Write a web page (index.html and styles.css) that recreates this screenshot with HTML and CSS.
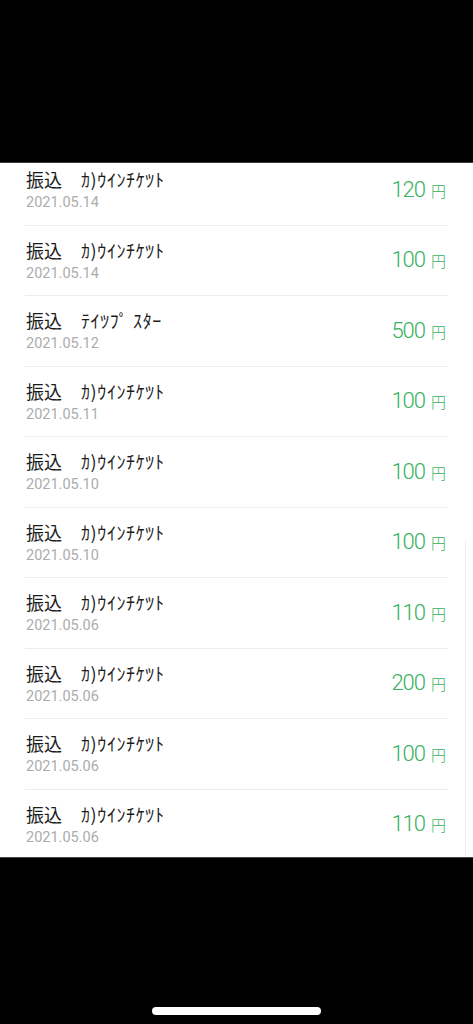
FILE: index.html
```html
<!DOCTYPE html>
<html lang="ja">
<head>
<meta charset="utf-8">
<link rel="stylesheet" href="styles.css">
</head>
<body>
<div class="screen">
  <div class="top-bar"></div>
  <div class="viewport">
    <ul class="list">
      <li class="row"><div class="info"><div class="title"><span>振込</span><span class="name">ｶ)ｳｲﾝﾁｹﾂﾄ</span></div><div class="date">2021.05.14</div></div><div class="amount"><span class="num">120</span><span class="yen">円</span></div></li>
      <li class="row"><div class="info"><div class="title"><span>振込</span><span class="name">ｶ)ｳｲﾝﾁｹﾂﾄ</span></div><div class="date">2021.05.14</div></div><div class="amount"><span class="num">100</span><span class="yen">円</span></div></li>
      <li class="row"><div class="info"><div class="title"><span>振込</span><span class="name">ﾃｲﾂﾌﾟ ｽﾀｰ</span></div><div class="date">2021.05.12</div></div><div class="amount"><span class="num">500</span><span class="yen">円</span></div></li>
      <li class="row"><div class="info"><div class="title"><span>振込</span><span class="name">ｶ)ｳｲﾝﾁｹﾂﾄ</span></div><div class="date">2021.05.11</div></div><div class="amount"><span class="num">100</span><span class="yen">円</span></div></li>
      <li class="row"><div class="info"><div class="title"><span>振込</span><span class="name">ｶ)ｳｲﾝﾁｹﾂﾄ</span></div><div class="date">2021.05.10</div></div><div class="amount"><span class="num">100</span><span class="yen">円</span></div></li>
      <li class="row"><div class="info"><div class="title"><span>振込</span><span class="name">ｶ)ｳｲﾝﾁｹﾂﾄ</span></div><div class="date">2021.05.10</div></div><div class="amount"><span class="num">100</span><span class="yen">円</span></div></li>
      <li class="row"><div class="info"><div class="title"><span>振込</span><span class="name">ｶ)ｳｲﾝﾁｹﾂﾄ</span></div><div class="date">2021.05.06</div></div><div class="amount"><span class="num">110</span><span class="yen">円</span></div></li>
      <li class="row"><div class="info"><div class="title"><span>振込</span><span class="name">ｶ)ｳｲﾝﾁｹﾂﾄ</span></div><div class="date">2021.05.06</div></div><div class="amount"><span class="num">200</span><span class="yen">円</span></div></li>
      <li class="row"><div class="info"><div class="title"><span>振込</span><span class="name">ｶ)ｳｲﾝﾁｹﾂﾄ</span></div><div class="date">2021.05.06</div></div><div class="amount"><span class="num">100</span><span class="yen">円</span></div></li>
      <li class="row"><div class="info"><div class="title"><span>振込</span><span class="name">ｶ)ｳｲﾝﾁｹﾂﾄ</span></div><div class="date">2021.05.06</div></div><div class="amount"><span class="num">110</span><span class="yen">円</span></div></li>
    </ul>
    <div class="scrollbar"></div>
  </div>
  <div class="bottom-bar"><div class="home-indicator"></div></div>
</div>
</body>
</html>
```
FILE: styles.css
```css
* { box-sizing: border-box; }
html, body { margin: 0; padding: 0; background: #000; }
body { width: 473px; height: 1024px; overflow: hidden; font-family: Roboto, "Noto Sans CJK JP", sans-serif; }

.screen { display: flex; flex-direction: column; height: 1024px; }

.top-bar { height: 163px; background: #000; border-bottom: 1px solid #3a3a3a; flex: none; }

.viewport {
  position: relative;
  height: 694px;
  flex: none;
  background: #fff;
  overflow: hidden;
}

.list {
  list-style: none;
  margin: -8px 25px 0 25px;
  padding: 0;
}

.row {
  height: 70.5px;
  border-bottom: 1px solid #ececec;
  display: flex;
  align-items: center;
  justify-content: space-between;
}

.info { padding-left: 1px; }

.title {
  display: flex;
  gap: 19px;
  font-family: "Noto Sans CJK JP", sans-serif;
  font-size: 18px;
  line-height: 22px;
  color: #1c1c1c;
  white-space: pre;
}

.name { letter-spacing: 0.6px; }

.date {
  font-family: Roboto, sans-serif;
  font-size: 14.5px;
  line-height: 17px;
  color: #acacac;
  margin-top: 4px;
}

.amount {
  color: #34b15e;
  display: flex;
  align-items: baseline;
  gap: 6px;
  margin-top: 1px;
  padding-right: 2px;
}

.num {
  font-family: Roboto, sans-serif;
  font-weight: 300;
  font-size: 22px;
  line-height: 24px;
  letter-spacing: -1px;
}

.yen {
  font-family: "Noto Sans CJK JP", sans-serif;
  font-weight: 300;
  font-size: 15px;
  line-height: 24px;
}

.scrollbar {
  position: absolute;
  left: 465px;
  top: 376px;
  width: 1px;
  bottom: 0;
  background: #f0f0f0;
}

.bottom-bar {
  flex: 1;
  background: #000;
  border-top: 1px solid #444;
  display: flex;
  justify-content: center;
  align-items: flex-end;
  padding-bottom: 9px;
}

.home-indicator {
  width: 169px;
  height: 8px;
  border-radius: 4px;
  background: #fff;
}
```
